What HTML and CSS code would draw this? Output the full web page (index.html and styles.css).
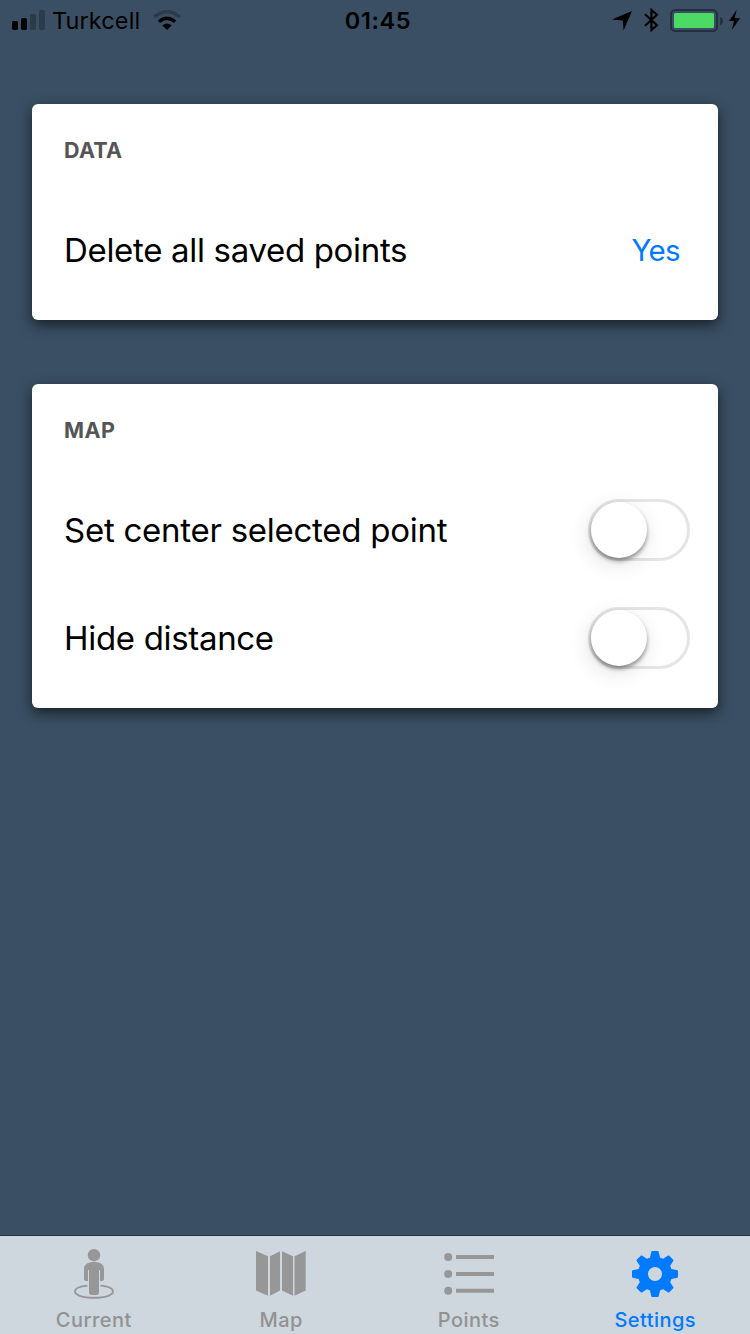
FILE: index.html
```html
<!DOCTYPE html>
<html lang="en">
<head>
<meta charset="utf-8">
<title>Settings</title>
<link rel="stylesheet" href="styles.css">
</head>
<body>
<div class="screen">
  <header class="status">
    <div class="status-left">
      <svg class="signal" width="34" height="20" viewBox="0 0 34 20">
        <rect x="0" y="11" width="6" height="9" rx="1.8"/>
        <rect x="9" y="8" width="6" height="12" rx="1.8"/>
        <rect x="18" y="4" width="6" height="16" rx="1.8" opacity=".25"/>
        <rect x="27" y="0" width="6" height="20" rx="1.8" opacity=".25"/>
      </svg>
      <span class="carrier">Turkcell</span>
      <svg class="wifi" width="28" height="20" viewBox="0 0 28 20">
        <path d="M14 20L9.4 15.4Q14 11.8 18.6 15.4Z"/>
        <path d="M5.9 11.8Q14 4.8 22.1 11.8" fill="none" stroke="#000" stroke-width="3.5"/>
        <path d="M1.2 7.1Q14-3.8 26.8 7.1" fill="none" stroke="#000" stroke-width="3.7" opacity=".25"/>
      </svg>
    </div>
    <span class="time">01:45</span>
    <div class="status-right">
      <svg class="location" width="20" height="20" viewBox="0 0 20 20"><path d="M20 0L11.6 19.4L10.8 9.6L0 8.6Z"/></svg>
      <svg class="bluetooth" width="15" height="24" viewBox="0 0 15 24"><path d="M1 6.2L13 17.2L7.4 22V2L13 6.8L1 17.8" fill="none" stroke="#000" stroke-width="2.1"/></svg>
      <svg class="battery" width="54" height="24" viewBox="0 0 54 24">
        <rect x="1" y="1" width="46" height="21" rx="4.5" fill="none" stroke="#232f3c" stroke-width="2"/>
        <rect x="4" y="4" width="40" height="15" rx="1.5" fill="#4cd964"/>
        <path d="M50 8Q53 9 53 12T50 16Z" fill="#232f3c"/>
      </svg>
      <svg class="bolt" width="11" height="20" viewBox="0 0 11 20"><path d="M7.6 0L0 11H5L2.8 20L11 8.3H5.7Z"/></svg>
    </div>
  </header>

  <main class="content">
    <section class="card">
      <h2 class="card-title">DATA</h2>
      <div class="row">
        <span class="label">Delete all saved points</span>
        <button class="action">Yes</button>
      </div>
    </section>
    <section class="card">
      <h2 class="card-title card-title-map">MAP</h2>
      <div class="row">
        <span class="label label-center">Set center selected point</span>
        <span class="toggle"><span class="knob"></span></span>
      </div>
      <div class="row">
        <span class="label">Hide distance</span>
        <span class="toggle"><span class="knob"></span></span>
      </div>
    </section>
  </main>

  <nav class="tabs">
    <a class="tab">
      <svg width="52" height="52" viewBox="0 0 52 52">
        <circle cx="26" cy="7.2" r="6.2"/>
        <path d="M16 21.5C16 16 20 14 26 14S36 16 36 21.5V31Q36 33 34 33H32V22H31V44Q31 47 28.5 47H23.500Q21 47 21 44V22H20V33H18Q16 33 16 31Z"/>
        <path d="M19.500 37.600C12 38.200 7 40.400 7 43.500C7 47.200 15 49.800 26 49.800S45 47.200 45 43.500C45 40.400 40 38.200 32.500 37.600" fill="none" stroke="#979797" stroke-width="1.900"/>
      </svg>
      <span class="tab-label">Current</span>
    </a>
    <a class="tab">
      <svg width="52" height="52" viewBox="0 0 52 52">
        <path d="M1 3L13 8.300V47.800L1 42.500Z M15 8.300L25 3.300V42.500L15 47.800Z M27 3.300L38 8.300V47.800L27 42.500Z M39.500 8.300L50.700 3V42.500L39.500 47.800Z"/>
      </svg>
      <span class="tab-label">Map</span>
    </a>
    <a class="tab">
      <svg width="52" height="52" viewBox="0 0 52 52">
        <circle cx="5.200" cy="9" r="4"/><circle cx="5.200" cy="26" r="4"/><circle cx="5.200" cy="42.800" r="4"/>
        <path d="M13 7H51V11H13Z M13 24H51V28H13Z M13 40.800H51V44.800H13Z"/>
      </svg>
      <span class="tab-label">Points</span>
    </a>
    <a class="tab tab-active">
      <svg width="52" height="52" viewBox="0 0 52 52">
        <defs><path id="tooth" d="M18.500 12L21 9.500L22.300 3.700Q22.500 3 23.200 3H28.800Q29.500 3 29.700 3.700L31 9.500L33.500 12Z"/></defs>
        <circle cx="26" cy="26" r="12" fill="none" stroke="#007aff" stroke-width="10"/>
        <use href="#tooth"/><use href="#tooth" transform="rotate(45 26 26)"/>
        <use href="#tooth" transform="rotate(90 26 26)"/><use href="#tooth" transform="rotate(135 26 26)"/>
        <use href="#tooth" transform="rotate(180 26 26)"/><use href="#tooth" transform="rotate(225 26 26)"/>
        <use href="#tooth" transform="rotate(270 26 26)"/><use href="#tooth" transform="rotate(315 26 26)"/>
      </svg>
      <span class="tab-label">Settings</span>
    </a>
  </nav>
</div>
</body>
</html>
```
FILE: styles.css
```css
* { box-sizing: border-box; }
body { margin: 0; font-family: Inter, "Liberation Sans", sans-serif; color: #000; }
svg { display: block; flex: none; }
.screen {
  width: 750px; height: 1334px; display: flex; flex-direction: column;
  background: #3a4f63; overflow: hidden;
}
.status {
  height: 40px; display: grid; grid-template-columns: 1fr auto 1fr;
  align-items: start; line-height: 40px;
}
.status-left { display: flex; padding-left: 12px; }
.signal, .wifi { margin-top: 10px; }
.carrier { margin-left: 6px; width: 101px; font-size: 23.5px; letter-spacing: .1px; line-height: 42px; white-space: nowrap; }
.time { font-size: 23.5px; font-weight: 600; letter-spacing: .6px; line-height: 42px; padding-left: 6px; }
.status-right { display: flex; justify-content: flex-end; padding-right: 10px; }
.location { margin: 11px 12px 0 0; }
.bluetooth { margin: 8px 11px 0 0; }
.battery { margin: 9px 5px 0 0; }
.bolt { margin-top: 10px; }

.content { flex: 1; padding: 64px 32px 0; display: flex; flex-direction: column; gap: 64px; }
.card {
  background: #fff; border-radius: 6px; padding: 0 28px 16px 32px;
  box-shadow: 0 5px 14px rgba(0, 0, 0, .6);
}
.card-title { margin: 0; height: 92px; line-height: 93px; font-size: 21.5px; font-weight: 700; color: #555; letter-spacing: .3px; }
.card-title-map { letter-spacing: .5px; }
.row { height: 108px; display: flex; align-items: center; justify-content: space-between; }
.label { font-size: 33px; line-height: 40px; letter-spacing: -.32px; white-space: nowrap; }
.label-center { letter-spacing: -.26px; }
.action {
  padding: 0; margin-right: 10px; border: 0; background: none;
  font: 29.5px/40px Inter, sans-serif; letter-spacing: -.7px; color: #007aff;
}
.toggle { width: 102px; height: 62px; display: flex; border: 3px solid #e5e5e5; border-radius: 31px; }
.knob {
  width: 56px; height: 56px; border-radius: 50%; background: #fff;
  box-shadow: 0 3px 4px rgba(0, 0, 0, .4), -2px 6px 22px rgba(0, 0, 0, .12);
}

.tabs {
  height: 99px; display: grid; grid-template-columns: repeat(4, 1fr);
  background: #ced6de; border-top: 1px solid #28333f;
}
.tab { display: flex; flex-direction: column; align-items: center; padding-top: 12px; color: #929292; fill: #979797; }
.tab-label { font-size: 20px; line-height: 24px; margin-top: 8px; font-weight: 500; letter-spacing: .45px; }
.tab-active { color: #007aff; fill: #007aff; padding-right: 2px; }
```
